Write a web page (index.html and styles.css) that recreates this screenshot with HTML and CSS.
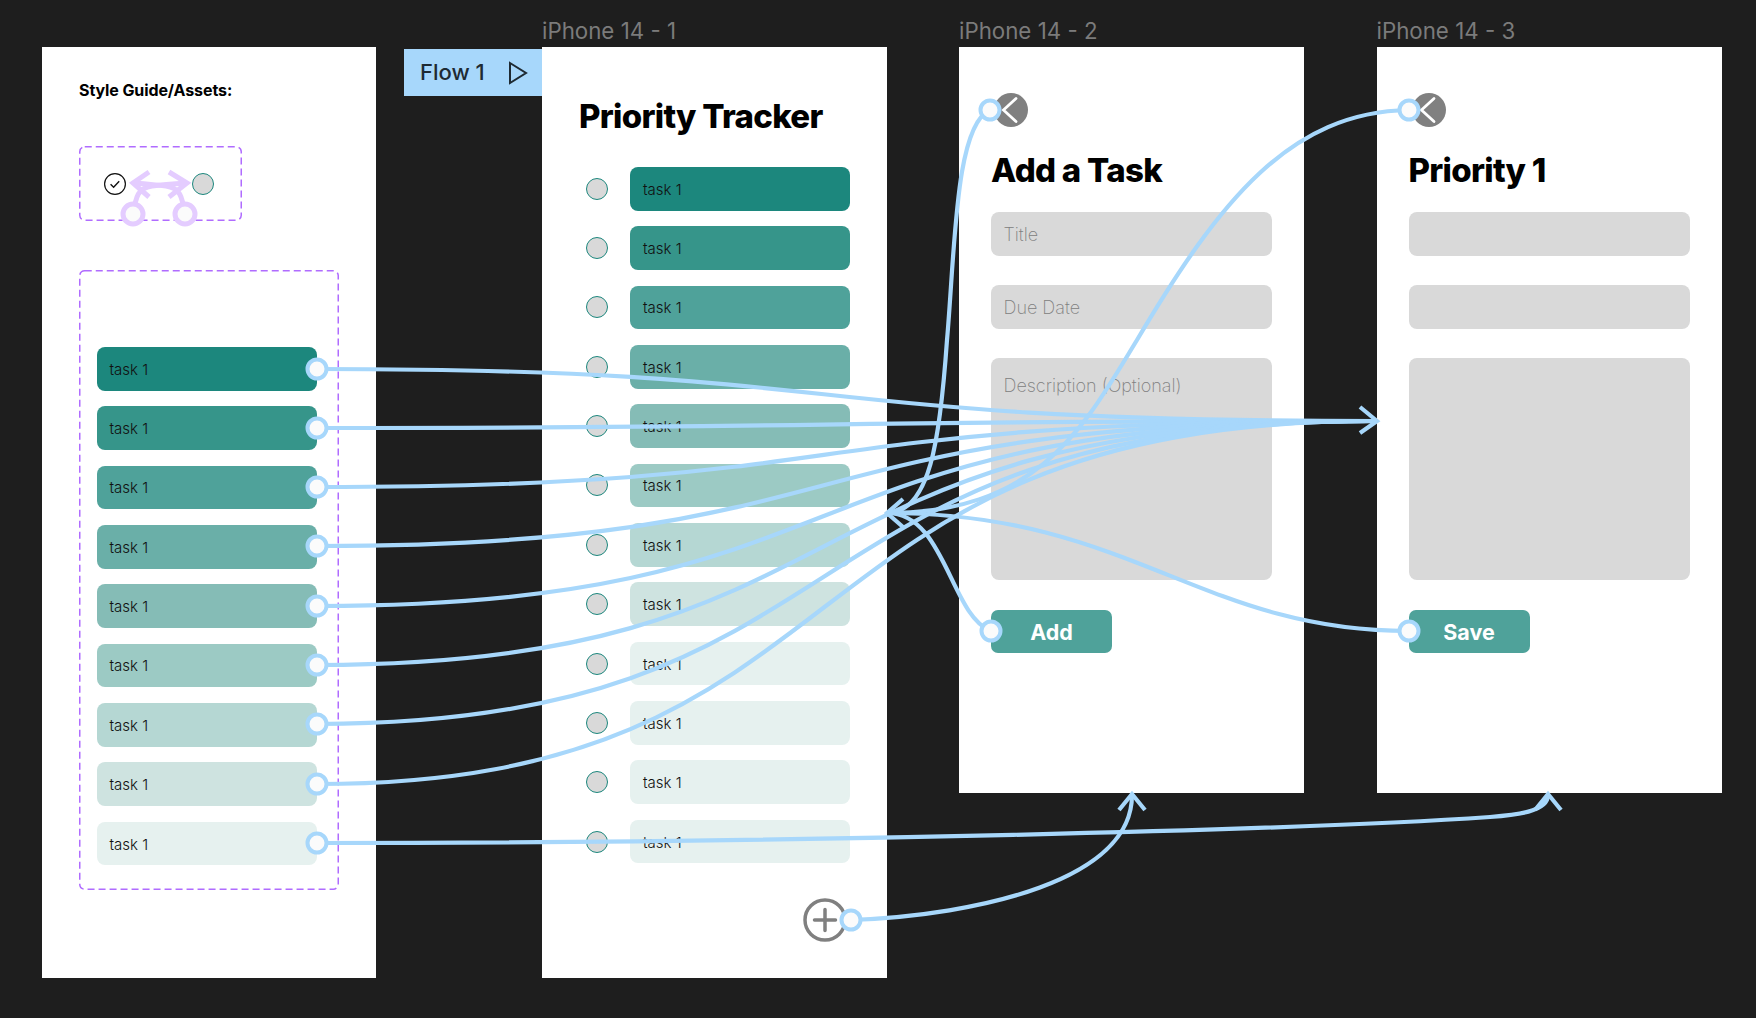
FILE: index.html
```html
<!DOCTYPE html>
<html lang="en">
<head>
<meta charset="utf-8">
<title>Priority Tracker</title>
<link rel="stylesheet" href="styles.css">
</head>
<body>
<div class="canvas">

<section class="frame frame-guide">
  <h2 class="guide-title">Style Guide/Assets:</h2>
  <div class="dashed dashed-icons">
    <svg class="dash-line" width="163" height="75"><rect x=".75" y=".75" width="161.5" height="73.5" rx="5"/></svg>
    <svg class="mini" width="22" height="22" viewBox="0 0 22 22"><circle cx="11" cy="11" r="10.4" fill="#fff" stroke="#111" stroke-width="1.2"/><path d="M6.6 11.3l3 3 5.6-6" fill="none" stroke="#111" stroke-width="1.4"/></svg>
    <span class="radio"></span>
  </div>
  <div class="dashed dashed-tasks">
    <svg class="dash-line" width="260" height="620"><rect x=".75" y=".75" width="258.5" height="618.5" rx="5"/></svg>
    <div class="task t1">task 1</div>
    <div class="task t2">task 1</div>
    <div class="task t3">task 1</div>
    <div class="task t4">task 1</div>
    <div class="task t5">task 1</div>
    <div class="task t6">task 1</div>
    <div class="task t7">task 1</div>
    <div class="task t8">task 1</div>
    <div class="task t9">task 1</div>
  </div>
</section>

<section class="frame frame-list">
  <div class="frame-label">iPhone 14 - 1</div>
  <div class="flow-tag">
    <span>Flow 1</span>
    <svg width="20" height="24" viewBox="0 0 20 24"><path d="M2 2l16 10L2 22z" fill="none" stroke="#1e2a33" stroke-width="2"/></svg>
  </div>
  <h1 class="heading">Priority Tracker</h1>
  <div class="rows">
    <div class="row"><span class="radio"></span><div class="task t1">task 1</div></div>
    <div class="row"><span class="radio"></span><div class="task t2">task 1</div></div>
    <div class="row"><span class="radio"></span><div class="task t3">task 1</div></div>
    <div class="row"><span class="radio"></span><div class="task t4">task 1</div></div>
    <div class="row"><span class="radio"></span><div class="task t5">task 1</div></div>
    <div class="row"><span class="radio"></span><div class="task t6">task 1</div></div>
    <div class="row"><span class="radio"></span><div class="task t7">task 1</div></div>
    <div class="row"><span class="radio"></span><div class="task t8">task 1</div></div>
    <div class="row"><span class="radio"></span><div class="task t9">task 1</div></div>
    <div class="row"><span class="radio"></span><div class="task t9">task 1</div></div>
    <div class="row"><span class="radio"></span><div class="task t9">task 1</div></div>
    <div class="row"><span class="radio"></span><div class="task t9">task 1</div></div>
  </div>
  <svg class="plus" width="44" height="44" viewBox="0 0 44 44"><circle cx="22" cy="22" r="20" fill="#fff" stroke="#808080" stroke-width="3.5"/><path d="M22 11.5v21M11.5 22h21" stroke="#808080" stroke-width="3.5" stroke-linecap="round"/></svg>
</section>

<section class="frame frame-form frame-add">
  <div class="frame-label">iPhone 14 - 2</div>
  <svg class="back" width="34" height="34" viewBox="0 0 34 34"><circle cx="17" cy="17" r="17" fill="#808080"/><path d="M22 5.5L9.5 17L22 28.5" fill="none" stroke="#fff" stroke-width="2.8" stroke-linecap="round"/></svg>
  <h1 class="heading">Add a Task</h1>
  <div class="field">Title</div>
  <div class="field">Due Date</div>
  <div class="field field-big">Description (Optional)</div>
  <div class="action">Add</div>
</section>

<section class="frame frame-form frame-edit">
  <div class="frame-label">iPhone 14 - 3</div>
  <svg class="back" width="34" height="34" viewBox="0 0 34 34"><circle cx="17" cy="17" r="17" fill="#808080"/><path d="M22 5.5L9.5 17L22 28.5" fill="none" stroke="#fff" stroke-width="2.8" stroke-linecap="round"/></svg>
  <h1 class="heading">Priority 1</h1>
  <div class="field"></div>
  <div class="field"></div>
  <div class="field field-big"></div>
  <div class="action">Save</div>
</section>

<!-- prototype wires, drawn over everything -->
<svg class="wires" width="1756" height="1018" viewBox="0 0 1756 1018">
  <g class="wire-guide">
    <path d="M133 214C136 196 138 188 152 186C160 185 172 184 187 183"/>
    <path d="M185 214C182 196 180 188 166 186C158 185 146 184 133 183"/>
    <path d="M149 172L133 183L149 197M169 172L187 183L169 197"/>
    <circle cx="133" cy="214" r="10"/>
    <circle cx="185" cy="214" r="10"/>
  </g>
  <g class="wire">
    <path d="M317 369C880 369 770 421 1376 421"/>
    <path d="M317 428C880 428 770 421 1376 421"/>
    <path d="M317 487C880 487 770 421 1376 421"/>
    <path d="M317 546C880 546 770 421 1376 421"/>
    <path d="M317 606C880 606 770 421 1376 421"/>
    <path d="M317 665C880 665 770 421 1376 421"/>
    <path d="M317 724C880 724 770 421 1376 421"/>
    <path d="M317 784C880 784 770 421 1376 421"/>
    <path d="M317 843C800 843 1300 830 1490 817C1515 815 1548 812 1548 795"/>
    <path d="M851 920C980 915 1132 880 1132 795"/>
    <path d="M990 110C955 125 955 250 947 340C940 440 930 513 887 513"/>
    <path d="M1409 110C1290 112 1220 200 1137 340C1085 425 1040 513 887 513"/>
    <path d="M991 631C950 615 945 513 887 513"/>
    <path d="M1409 631C1200 631 1130 513 887 513"/>
    <path d="M1360 407L1377 421L1360 433"/>
    <path d="M903 499L887 513L903 527"/>
    <path d="M1119 810L1132 794L1145 810"/>
    <path d="M1535 810L1548 794L1561 810"/>
  </g>
  <g class="nodes">
    <circle cx="317" cy="369" r="9.5"/>
    <circle cx="317" cy="428" r="9.5"/>
    <circle cx="317" cy="487" r="9.5"/>
    <circle cx="317" cy="546" r="9.5"/>
    <circle cx="317" cy="606" r="9.5"/>
    <circle cx="317" cy="665" r="9.5"/>
    <circle cx="317" cy="724" r="9.5"/>
    <circle cx="317" cy="784" r="9.5"/>
    <circle cx="317" cy="843" r="9.5"/>
    <circle cx="851" cy="920" r="9.5"/>
    <circle cx="990" cy="110" r="9.5"/>
    <circle cx="1409" cy="110" r="9.5"/>
    <circle cx="991" cy="631" r="9.5"/>
    <circle cx="1409" cy="631" r="9.5"/>
  </g>
</svg>

</div>
</body>
</html>
```

FILE: styles.css
```css
* {
  box-sizing: border-box;
}
html, body {
  margin: 0;
  height: 100%;
  background: #1e1e1e;
}
body {
  font-family: Inter, "Noto Sans", sans-serif;
  overflow: hidden;
}
.canvas {
  position: relative;
  width: 1756px;
  height: 1018px;
}

/* frames sit on the free canvas */
.frame {
  position: absolute;
  top: 47px;
  background: #fff;
  display: flex;
  flex-direction: column;
}
.frame-guide {
  left: 42px;
  width: 334px;
  height: 931px;
  padding: 34px 0 0 37px;
}
.frame-list {
  left: 542px;
  width: 345px;
  height: 931px;
  padding: 50px 0 0 37px;
}
.frame-form {
  width: 345px;
  height: 746px;
  padding: 46px 32px 0;
}
.frame-add {
  left: 959px;
}
.frame-edit {
  left: 1376.5px;
}
.frame-label {
  position: absolute;
  left: 0;
  bottom: 100%;
  margin-bottom: 3px;
  font-size: 22.3px;
  line-height: 26px;
  color: #7b7b7b;
}

.guide-title {
  margin: 0;
  font-size: 16px;
  line-height: 18px;
  font-weight: 700;
  letter-spacing: -.1px;
  color: #000;
}
.dashed {
  position: relative;
}
.dash-line {
  position: absolute;
  left: 0;
  top: 0;
}
.dash-line rect {
  fill: none;
  stroke: #b06cff;
  stroke-width: 1.5;
  stroke-dasharray: 7 4;
}
.dashed-icons {
  width: 163px;
  height: 75px;
  margin-top: 47px;
  padding: 27px 28px 0 25px;
  display: flex;
  justify-content: space-between;
  align-items: flex-start;
}
.mini {
  position: relative;
}
.dashed-tasks {
  width: 260px;
  height: 620px;
  margin-top: 49px;
  padding: 77px 0 0 17.5px;
  display: flex;
  flex-direction: column;
  gap: 15.85px;
}

.task {
  width: 220.5px;
  height: 43.5px;
  padding: 1px 0 0 13px;
  display: flex;
  align-items: center;
  border-radius: 8px;
  font-size: 15px;
  font-weight: 300;
  color: #111;
}
.t1 { background: #1c877d; }
.t2 { background: #36958a; }
.t3 { background: #4fa29a; }
.t4 { background: #6aafa8; }
.t5 { background: #85bcb6; }
.t6 { background: #9ccac4; }
.t7 { background: #b5d7d3; }
.t8 { background: #cee3e0; }
.t9 { background: #e6f1ef; }

.radio {
  flex: none;
  position: relative;
  width: 22px;
  height: 22px;
  border-radius: 50%;
  background: #d9d9d9;
  border: 1.2px solid #1c877d;
}

.flow-tag {
  position: absolute;
  right: 100%;
  top: 2px;
  width: 138px;
  height: 47px;
  padding: 0 14px 2px 16px;
  display: flex;
  align-items: center;
  justify-content: space-between;
  background: #a7d7fb;
  font-size: 22px;
  font-weight: 500;
  color: #1e2a33;
}
.flow-tag svg {
  margin-top: 2px;
}

.heading {
  margin: 0;
  font-size: 33px;
  line-height: 38px;
  font-weight: 800;
  letter-spacing: -.7px;
  color: #000;
}
.rows {
  margin-top: 32px;
  padding-left: 7px;
  display: flex;
  flex-direction: column;
  gap: 15.85px;
}
.row {
  display: flex;
  align-items: center;
  gap: 22px;
}
.rows .task {
  width: 220px;
}
.plus {
  position: absolute;
  left: 261px;
  top: 851px;
}

.back {
  margin-left: 3px;
}
.frame-form .heading {
  margin-top: 24px;
}
.field {
  height: 44px;
  margin-top: 29px;
  padding: 0 12.5px;
  display: flex;
  align-items: center;
  background: #d9d9d9;
  border-radius: 8px;
  font-size: 18px;
  font-weight: 200;
  color: #808080;
}
.frame-form .heading + .field {
  margin-top: 23px;
}
.field-big {
  height: 222px;
  align-items: flex-start;
  padding-top: 17px;
}
.action {
  width: 121px;
  height: 43px;
  margin-top: 30px;
  display: flex;
  align-items: center;
  justify-content: center;
  background: #4fa29a;
  border-radius: 7px;
  font-size: 21.5px;
  font-weight: 700;
  color: #fff;
}

.wires {
  position: absolute;
  left: 0;
  top: 0;
  pointer-events: none;
}
.wire path {
  fill: none;
  stroke: #a7d7fb;
  stroke-width: 4.2;
}
.nodes circle {
  fill: #fbfbfb;
  stroke: #a7d7fb;
  stroke-width: 4;
}
.wire-guide path, .wire-guide circle {
  fill: none;
  stroke: #e4ccff;
  stroke-width: 5;
}
.wire-guide circle {
  fill: #fbfbfb;
}
```
